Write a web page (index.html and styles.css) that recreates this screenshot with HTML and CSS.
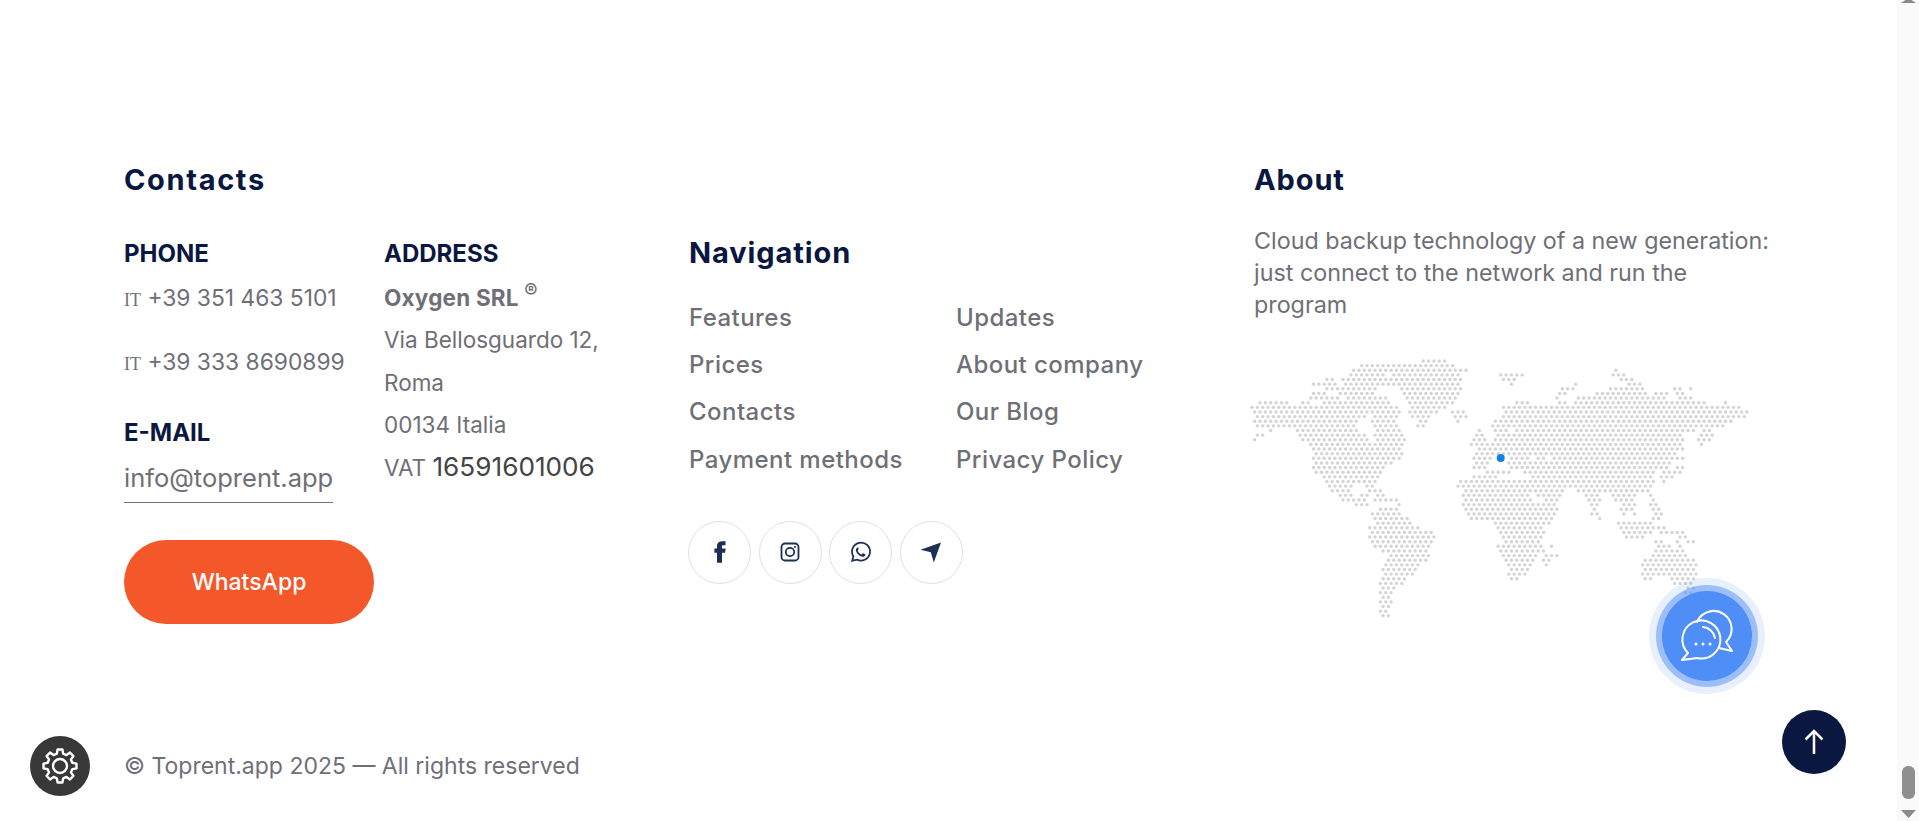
FILE: index.html
```html
<!DOCTYPE html>
<html lang="en">
<head>
  <meta charset="UTF-8">
  <title>Toprent.app</title>
  <link rel="stylesheet" href="styles.css">
</head>
<body>

  <footer class="footer">
    <div class="columns">

      <section class="contacts">
        <h3 class="title">Contacts</h3>
        <div class="contact-cols">
          <div class="contact-left">
            <h4 class="label">PHONE</h4>
            <p class="phone"><span class="flag">IT</span> +39 351 463 5101</p>
            <p class="phone"><span class="flag">IT</span> +39 333 8690899</p>
            <h4 class="label label-mail">E-MAIL</h4>
            <a class="mail" href="#">info@toprent.app</a>
            <a class="btn-whatsapp" href="#">WhatsApp</a>
          </div>
          <div class="contact-right">
            <h4 class="label">ADDRESS</h4>
            <address class="address">
              <strong>Oxygen SRL <sup>®</sup></strong><br>
              Via Bellosguardo 12,<br>
              Roma<br>
              00134 Italia<br>
              VAT <span class="vat">16591601006</span>
            </address>
          </div>
        </div>
      </section>

      <section class="nav">
        <h3 class="title">Navigation</h3>
        <ul class="nav-links">
          <li><a href="#">Features</a></li>
          <li><a href="#">Updates</a></li>
          <li><a href="#">Prices</a></li>
          <li><a href="#">About company</a></li>
          <li><a href="#">Contacts</a></li>
          <li><a href="#">Our Blog</a></li>
          <li><a href="#">Payment methods</a></li>
          <li><a href="#">Privacy Policy</a></li>
        </ul>
        <div class="socials">
          <a class="social" href="#">
            <svg width="24" height="24" viewBox="0 0 24 24"><path class="icon-fill" d="M14 8.6V6.4c0-1 .6-1.2 1-1.2h2.5V1.2H14c-4 0-5 2.9-5 4.9v2.5H6.400v4.200H9V22.800h5V12.800h3.100l.5-4.200z"/></svg>
          </a>
          <a class="social" href="#">
            <svg width="24" height="24" viewBox="0 0 24 24"><rect class="icon-line" x="3.500" y="3.500" width="17" height="17" rx="3.500"/><circle class="icon-line" cx="12" cy="12" r="4.200"/><circle class="icon-fill" cx="17" cy="7" r="1"/></svg>
          </a>
          <a class="social" href="#">
            <svg width="24" height="24" viewBox="0 0 24 24"><path class="icon-line" d="M3.200 20.800l1.200-4.400A9 9 0 1 1 7.900 19.600z"/><path class="icon-fill" d="M9 7.500c-.3 0-.8.1-1.200.6-.4.5-1.100 1.200-.9 2.600.3 1.500 1.400 3 2.900 4.300 1.500 1.200 3 1.800 4.200 1.800 1.100-.1 2-.8 2.300-1.600.1-.5.1-.9 0-1l-2.100-1c-.2-.1-.4-.1-.5.1l-.8 1c-.1.2-.3.2-.5.1-.9-.4-1.700-.9-2.400-1.600-.6-.6-1-1.200-1.300-1.800-.1-.2 0-.4.1-.5l.5-.6c.1-.2.2-.4.1-.6L9.600 7.900c-.1-.3-.3-.4-.6-.4z"/></svg>
          </a>
          <a class="social" href="#">
            <svg width="24" height="24" viewBox="0 0 24 24"><path class="icon-fill" d="M22 2.500L1.500 9.800l10.300 2.500 3 10.200z"/></svg>
          </a>
        </div>
      </section>

      <section class="about">
        <h3 class="title">About</h3>
        <p class="about-text">Cloud backup technology of a new generation: just connect to the network and run the program</p>
        <svg class="world-map" id="worldMap" width="510" height="268"></svg>
      </section>

    </div>
    <p class="copyright">© Toprent.app 2025 — All rights reserved</p>
  </footer>

  <a class="fab-gear" href="#">
    <svg width="40" height="40" viewBox="-20 -20 40 40" fill="none" stroke="#fff" stroke-width="2.400" stroke-linejoin="round">
      <polygon points="-3.200,-12.300 -2.400,-16.500 2.400,-16.500 3.200,-12.300 6.430,-10.950 9.980,-13.390 13.390,-9.980 10.950,-6.430 12.300,-3.200 16.500,-2.400 16.500,2.400 12.300,3.200 10.950,6.430 13.390,9.980 9.980,13.390 6.430,10.950 3.200,12.300 2.400,16.500 -2.400,16.500 -3.200,12.300 -6.430,10.950 -9.980,13.390 -13.390,9.980 -10.950,6.430 -12.300,3.200 -16.500,2.400 -16.500,-2.400 -12.300,-3.200 -10.950,-6.430 -13.390,-9.980 -9.980,-13.390 -6.430,-10.950"/>
      <circle r="7"/>
    </svg>
  </a>

  <a class="fab-chat" href="#">
    <svg width="64" height="64" viewBox="0 0 64 64" fill="none" stroke="#fff" stroke-width="2" stroke-linejoin="round" stroke-linecap="round">
      <path d="M22 18A18 18 0 1 1 51 38L57 47 44 44"/>
      <path d="M13 49A19 19 0 1 1 22 54L7 56z"/>
      <path d="M28 23A13 13 0 0 1 40 34"/>
      <circle cx="21" cy="40" r="1.500" fill="#fff" stroke="none"/>
      <circle cx="28" cy="40" r="1.500" fill="#fff" stroke="none"/>
      <circle cx="35" cy="40" r="1.500" fill="#fff" stroke="none"/>
    </svg>
  </a>

  <a class="fab-up" href="#">
    <svg width="24" height="30" viewBox="0 0 24 30" fill="none" stroke="#fff" stroke-width="2.500">
      <path d="M12 27V4M3.500 12.500L12 4l8.500 8.500"/>
    </svg>
  </a>

  <div class="scrollbar">
    <span class="scroll-up"></span>
    <span class="scroll-thumb"></span>
    <span class="scroll-down"></span>
  </div>

  <script src="map.js"></script>
</body>
</html>
```

FILE: styles.css
```css
html, body {
  margin: 0;
  height: 821px;
  overflow: hidden;
  background: #fff;
}

body {
  font-family: Inter, "Noto Sans", sans-serif;
  color: #6f6f77;
}

h3, h4, p, ul {
  margin: 0;
  padding: 0;
}

a {
  color: inherit;
  text-decoration: none;
}

.footer {
  padding: 162px 0 0 124px;
}

.columns {
  display: grid;
  grid-template-columns: 565px 565px 1fr;
  height: 584px;
}

.title {
  font-size: 29px;
  line-height: 36px;
  font-weight: 700;
  color: #0a1740;
  letter-spacing: 0.900px;
}

.contacts .title {
  letter-spacing: 1.650px;
}

.contact-cols {
  display: flex;
  margin-top: 41px;
}

.contact-left {
  width: 260px;
}

.label {
  font-size: 24px;
  line-height: 30px;
  font-weight: 700;
  color: #0a1740;
}

.phone {
  font-size: 22.800px;
  line-height: 32px;
  margin-top: 13px;
  margin-bottom: 0;
  height: 51px;
}

.flag {
  font-family: "Liberation Serif", serif;
  font-size: 18px;
}

.label-mail {
  margin-top: 21px;
}

.mail {
  display: table;
  font-size: 25.500px;
  line-height: 36px;
  margin-top: 12px;
  padding-bottom: 6px;
  border-bottom: 1px solid #6f6f77;
}

.btn-whatsapp {
  display: flex;
  align-items: center;
  justify-content: center;
  width: 250px;
  height: 84px;
  margin-top: 37px;
  border-radius: 42px;
  background: #f4572a;
  color: #fff;
  font-size: 23px;
  font-weight: 500;
}

.address {
  font-style: normal;
  font-size: 22.500px;
  line-height: 42.300px;
  margin-top: 8px;
}

.address strong {
  letter-spacing: 0.200px;
}

.address sup {
  font-size: 20px;
  line-height: 0;
}

.vat {
  font-size: 26.200px;
  color: #444;
}

.nav .title {
  margin-top: 73px;
}

.nav-links {
  display: grid;
  grid-template-columns: 267px 1fr;
  row-gap: 13.200px;
  margin-top: 30px;
  list-style: none;
  font-size: 24px;
  line-height: 34px;
  font-weight: 500;
  letter-spacing: 0.450px;
}

.socials {
  display: flex;
  gap: 7.500px;
  margin-top: 44px;
  margin-left: -1px;
}

.social {
  display: flex;
  align-items: center;
  justify-content: center;
  box-sizing: border-box;
  width: 63px;
  height: 63px;
  border: 1px solid #dfe0e6;
  border-radius: 50%;
}

.icon-fill {
  fill: #1c2f55;
}

.icon-line {
  fill: none;
  stroke: #1c2f55;
  stroke-width: 1.800;
}

.about-text {
  width: 520px;
  font-size: 23.300px;
  line-height: 32px;
  margin-top: 27px;
}

.world-map {
  display: block;
  margin: 38px 0 0 -2px;
  overflow: visible;
}

.copyright {
  font-size: 23px;
  line-height: 30px;
  margin-top: 5px;
}

.fab-gear, .fab-chat, .fab-up {
  position: fixed;
  display: flex;
  align-items: center;
  justify-content: center;
  border-radius: 50%;
}

.fab-gear {
  left: 30px;
  top: 736px;
  width: 60px;
  height: 60px;
  background: #383838;
}

.fab-chat {
  left: 1662px;
  top: 591px;
  width: 90px;
  height: 90px;
  background: #4f8ef7;
  box-shadow: 0 0 0 6px rgba(79, 142, 247, 0.5), 0 0 0 13px rgba(79, 142, 247, 0.13);
}

.fab-up {
  left: 1782px;
  top: 710px;
  width: 64px;
  height: 64px;
  background: #0a1740;
}

.scrollbar {
  position: fixed;
  right: 0;
  top: 0;
  width: 22px;
  height: 821px;
  background: #fafafa;
}

.scroll-up {
  position: absolute;
  left: 4px;
  top: 0;
  width: 15px;
  height: 3px;
  background: #8a8a8a;
  clip-path: polygon(30% 0, 70% 0, 100% 100%, 0 100%);
}

.scroll-thumb {
  position: absolute;
  left: 5px;
  top: 766px;
  width: 13px;
  height: 33px;
  border-radius: 6px;
  background: #8f8f8f;
}

.scroll-down {
  position: absolute;
  left: 4px;
  top: 810px;
  width: 15px;
  height: 8px;
  background: #8a8a8a;
  clip-path: polygon(0 0, 100% 0, 50% 100%);
}
```

FILE: map.js
```js
// land spans per dot row, [from, to, from, to, ...] in map units
const rows = [
  [530,595],
  [345,618],
  [325,655, 1088,1088],
  [325,420, 445,635, 750,815, 1080,1115],
  [250,270, 295,405, 420,635, 760,805, 1100,1135],
  [212,278, 300,395, 418,640, 780,785, 975,975, 1125,1160],
  [245,390, 470,640, 935,970, 1070,1165, 1265,1285, 1310,1310],
  [212,248, 285,390, 475,635, 930,945, 1035,1185, 1210,1235, 1270,1290],
  [205,285, 305,335, 350,420, 485,625, 925,925, 980,1230, 1280,1315],
  [60,140, 180,200, 240,440, 490,615, 795,830, 930,950, 975,1350, 1405,1410],
  [40,450, 495,600, 770,870, 890,1450],
  [48,470, 495,575, 615,650, 765,1470],
  [45,370, 385,455, 505,545, 620,655, 760,1465],
  [45,335, 375,455, 515,540, 630,630, 735,785, 800,1425],
  [55,325, 395,450, 520,535, 730,785, 800,1400],
  [80,95, 165,335, 395,460, 690,695, 740,780, 800,1320, 1350,1365],
  [55,70, 175,360, 395,465, 680,705, 745,780, 800,1275, 1340,1365],
  [48,48, 185,365, 395,485, 675,715, 735,1290, 1335,1365],
  [200,475, 670,725, 735,1280, 1340,1340],
  [210,470, 690,1290],
  [215,465, 690,1270],
  [210,460, 675,730, 780,830, 870,890, 915,1290],
  [215,435, 680,715, 775,1245],
  [210,415, 680,710, 790,810, 825,1240, 1275,1285],
  [215,405, 710,750, 770,780, 830,1205, 1225,1285],
  [240,395, 675,750, 795,795, 855,1195, 1225,1250],
  [247,387, 632,905, 925,1200, 1237,1237],
  [256,320, 373,392, 629,949, 963,1200],
  [261,315, 382,402, 649,842, 862,939, 983,1186],
  [290,320, 344,363, 392,421, 644,842, 871,929, 1002,1045, 1084,1147, 1191,1200],
  [290,358, 397,460, 649,847, 885,920, 1007,1041, 1089,1142, 1191,1205],
  [329,378, 465,465, 649,885, 895,920, 1012,1036, 1108,1147, 1196,1205],
  [368,368, 411,460, 658,915, 1021,1036, 1108,1147, 1191,1210],
  [377,465, 668,920, 1026,1036, 1108,1123, 1138,1142, 1200,1220],
  [397,489, 668,905, 1041,1041, 1176,1176, 1205,1225],
  [392,494, 745,895, 1094,1190],
  [382,518, 745,881, 1099,1210, 1234,1234],
  [382,557, 755,876, 1108,1200, 1229,1292],
  [382,561, 760,876, 1128,1176, 1191,1191, 1273,1302],
  [387,552, 765,871, 1200,1220, 1273,1273, 1302,1321],
  [397,547, 755,876, 905,905, 1220,1254, 1283,1283],
  [421,542, 750,857, 871,891, 1205,1287],
  [431,547, 760,857, 890,925, 1191,1297],
  [431,537, 770,857, 886,905, 1171,1317],
  [426,518, 779,847, 895,895, 1162,1331],
  [421,508, 779,842, 1171,1321],
  [426,503, 784,833, 1171,1321],
  [421,479, 779,813, 1171,1200, 1258,1321],
  [411,474, 1268,1312],
  [416,450, 1297,1312],
  [411,445, 1297,1307],
  [416,440],
  [411,445],
  [406,436],
  [411,431],
  [421,436]
];

const UNITS_PER_PX = 2.904;
const DOT_STEP = 5.35;
const ROW_STEP = 4.633;

const map = document.getElementById('worldMap');

function addDot(x, y, r, color) {
  const dot = document.createElementNS('http://www.w3.org/2000/svg', 'circle');
  dot.setAttribute('cx', x.toFixed(2));
  dot.setAttribute('cy', y.toFixed(2));
  dot.setAttribute('r', r);
  dot.setAttribute('fill', color);
  map.appendChild(dot);
}

rows.forEach((spans, i) => {
  const y = 2 + i * ROW_STEP;
  const shift = i % 2 ? DOT_STEP / 2 : 0;
  for (let x = shift; x < 510; x += DOT_STEP) {
    const unit = (x + 12) * UNITS_PER_PX;
    for (let s = 0; s < spans.length; s += 2) {
      if (unit >= spans[s] - 6 && unit <= spans[s + 1] + 6) {
        addDot(x, y, 1.7, '#d4d4d4');
        break;
      }
    }
  }
});

// the one marked office
addDot(248.7, 99, 4, '#0a84e8');
```
